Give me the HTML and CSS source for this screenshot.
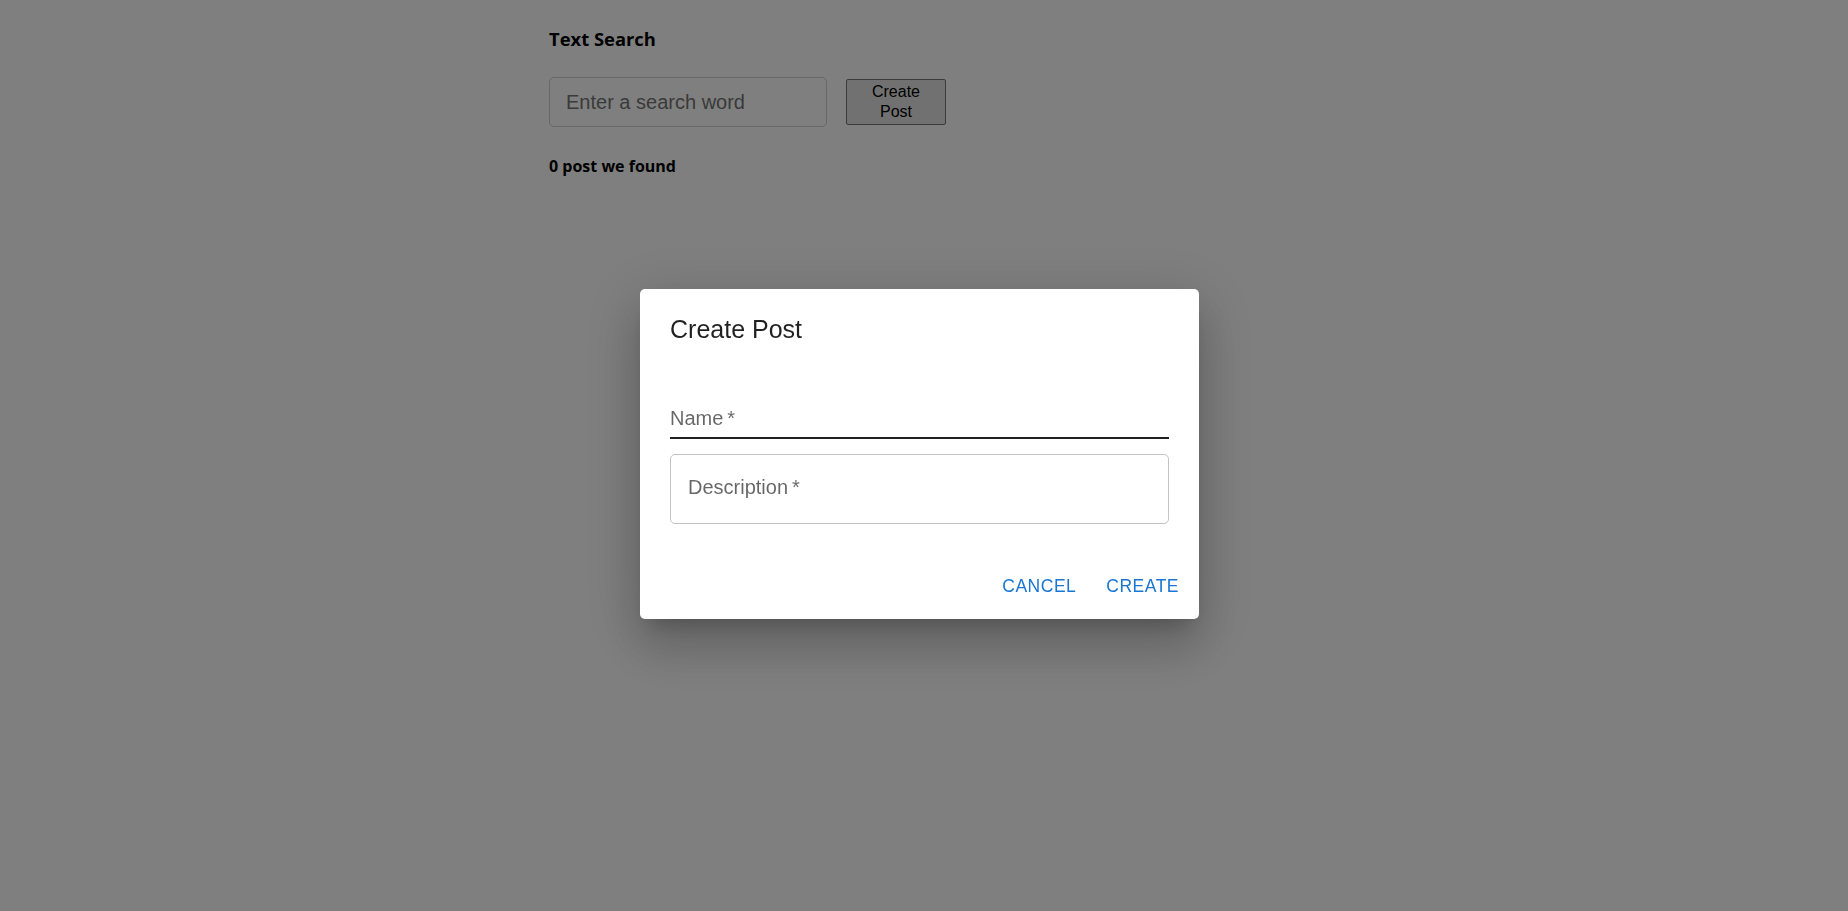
FILE: index.html
```html
<!DOCTYPE html>
<html lang="en">
<head>
<meta charset="utf-8">
<title>Text Search</title>
<link rel="stylesheet" href="styles.css">
</head>
<body>
<main class="page">
  <h3 class="page-title">Text Search</h3>
  <div class="search-row">
    <input class="search-input" type="text" placeholder="Enter a search word">
    <button class="create-btn" type="button">Create Post</button>
  </div>
  <h4 class="result-count">0 post we found</h4>
</main>

<div class="backdrop">
  <div class="dialog" role="dialog" aria-labelledby="dlg-title">
    <h2 class="dialog-title" id="dlg-title">Create Post</h2>
    <div class="dialog-content">
      <div class="field-standard">
        <label class="field-label">Name&thinsp;*</label>
        <div class="field-input"></div>
      </div>
      <div class="field-outlined">
        <label class="field-label">Description&thinsp;*</label>
      </div>
    </div>
    <div class="dialog-actions">
      <button class="text-btn" type="button">Cancel</button>
      <button class="text-btn" type="button">Create</button>
    </div>
  </div>
</div>
</body>
</html>
```
FILE: styles.css
```css
html, body {
  margin: 0;
  padding: 0;
  background: #ffffff;
  height: 100%;
}

body {
  font-family: "Open Sans", "Liberation Sans", Arial, sans-serif;
  color: #000;
}

.page {
  width: 750px;
  margin: 0 auto;
  padding-top: 25px;
}

.page-title {
  margin: 0;
  font-size: 18.4px;
  font-weight: 700;
  line-height: 28px;
}

.search-row {
  display: flex;
  align-items: center;
  gap: 19px;
  margin-top: 24px;
  height: 50px;
}

.search-input {
  box-sizing: border-box;
  width: 278px;
  height: 50px;
  border: 1px solid #cfcfcf;
  border-radius: 5px;
  padding: 0 16px;
  font-family: "Liberation Sans", Arial, sans-serif;
  font-size: 20px;
  color: #000;
  background: #fff;
  outline: none;
}

.search-input::placeholder {
  color: #757575;
}

.create-btn {
  box-sizing: border-box;
  width: 100px;
  height: 46px;
  padding: 0 14px;
  border: 1px solid #767676;
  border-radius: 2px;
  background: #e3e3e3;
  font-family: "Liberation Sans", Arial, sans-serif;
  font-size: 16px;
  line-height: 20px;
  color: #000;
}

.result-count {
  margin: 28px 0 0;
  font-size: 16px;
  font-weight: 700;
  line-height: 22px;
}

/* modal */
.backdrop {
  position: fixed;
  inset: 0;
  background: rgba(0, 0, 0, 0.5);
  display: flex;
  align-items: center;
  justify-content: center;
  padding: 0 9px 3px 0;
}

.dialog {
  width: 559px;
  background: #fff;
  border-radius: 5px;
  box-shadow: 0 14px 19px -9px rgba(0, 0, 0, 0.2),
              0 30px 48px 4px rgba(0, 0, 0, 0.14),
              0 11px 58px 10px rgba(0, 0, 0, 0.12);
  font-family: "Liberation Sans", Arial, sans-serif;
  display: flex;
  flex-direction: column;
}

.dialog-title {
  margin: 0;
  padding: 20px 30px;
  font-size: 25px;
  font-weight: 400;
  line-height: 40px;
  color: rgba(0, 0, 0, 0.87);
}

.dialog-content {
  padding: 0 30px 29px;
  display: flex;
  flex-direction: column;
  gap: 15px;
}

.field-label {
  display: block;
  font-size: 20px;
  line-height: 24px;
  color: rgba(0, 0, 0, 0.6);
}

.field-standard {
  padding-top: 37px;
  border-bottom: 2px solid rgba(0, 0, 0, 0.87);
}

.field-input {
  height: 7px;
}

.field-outlined {
  box-sizing: border-box;
  height: 70px;
  border: 1px solid #c4c4c4;
  border-radius: 5px;
  padding: 22px 17px 0;
}

.field-outlined .field-label {
  line-height: 20px;
}

.dialog-actions {
  display: flex;
  justify-content: flex-end;
  align-items: center;
  gap: 10px;
  padding: 10px;
}

.text-btn {
  min-width: 80px;
  padding: 7.5px 10px;
  border: 0;
  background: transparent;
  font-family: "Liberation Sans", Arial, sans-serif;
  font-size: 17.5px;
  line-height: 30.6px;
  letter-spacing: 0.5px;
  text-transform: uppercase;
  color: #1976d2;
  border-radius: 5px;
}
```
